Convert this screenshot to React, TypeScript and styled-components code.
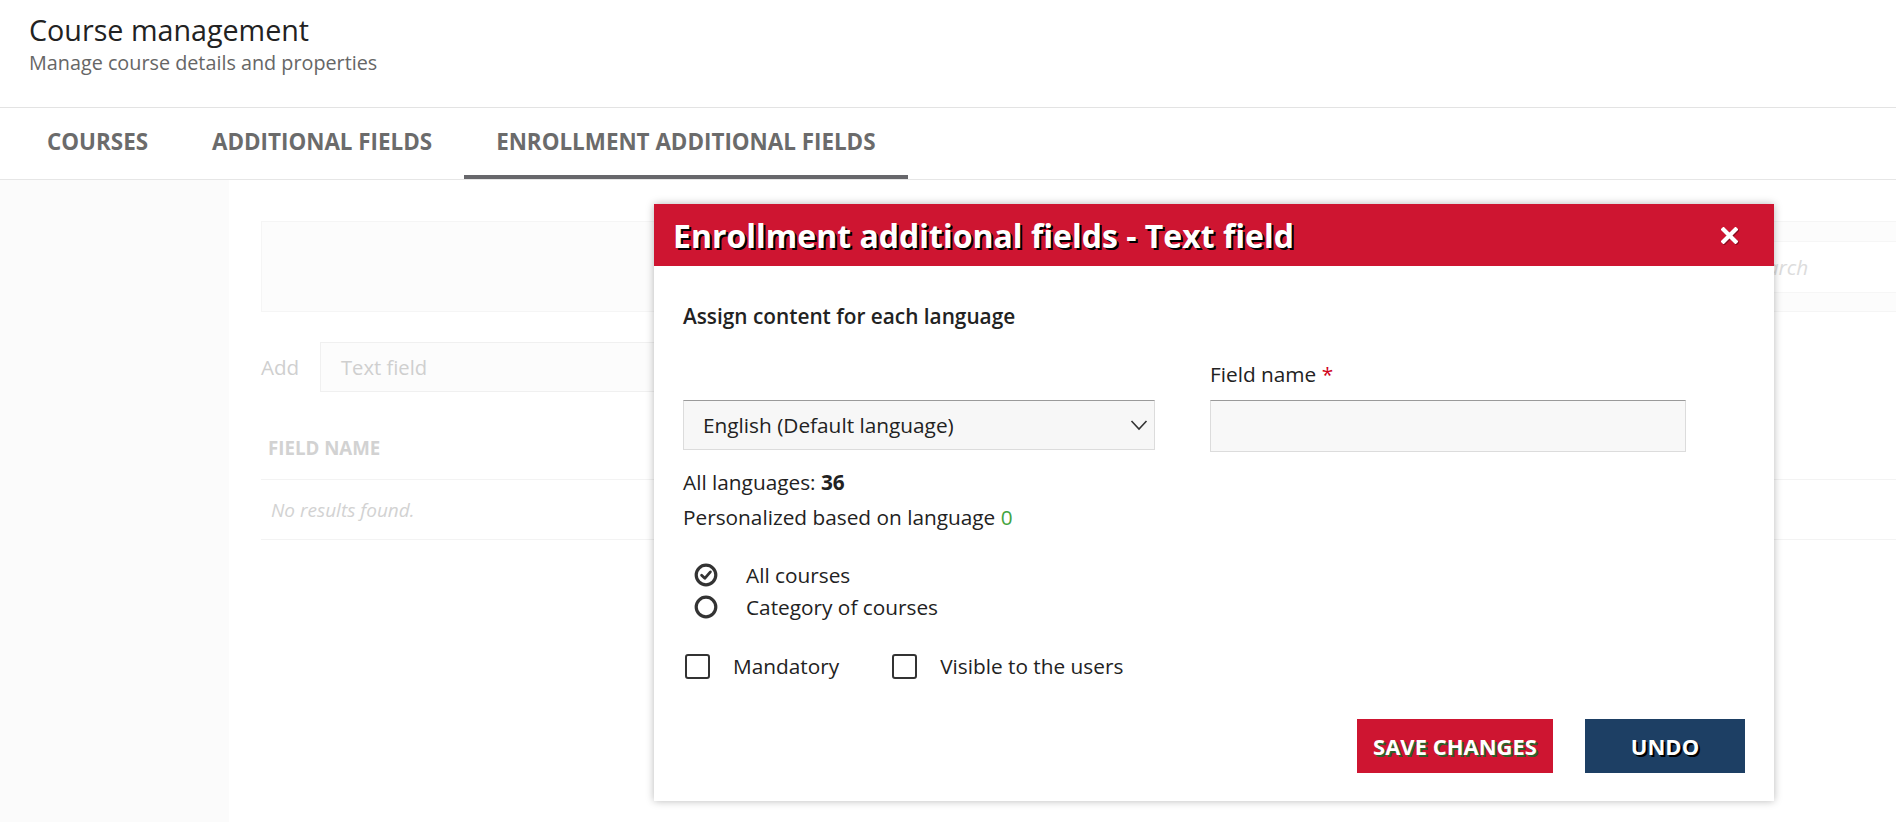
import React from "react";
import styled, { createGlobalStyle } from "styled-components";

const GlobalStyle = createGlobalStyle`
  html, body {
    margin: 0;
    padding: 0;
    background: #ffffff;
    font-family: "Open Sans", "Noto Sans", Arial, sans-serif;
    color: #222;
    overflow: hidden;
  }
  * { box-sizing: border-box; }
`;

const Page = styled.div`
  position: relative;
  width: 1896px;
  height: 822px;
  overflow: hidden;
  display: flex;
  flex-direction: column;
`;

const Header = styled.header`
  padding: 11px 29px 31px;
  border-bottom: 1px solid #e3e3e3;
`;

const Title = styled.h1`
  margin: 0;
  font-size: 28.7px;
  line-height: 38px;
  font-weight: 400;
  color: #222;
`;

const Subtitle = styled.p`
  margin: 0;
  font-size: 19.8px;
  line-height: 27px;
  color: #666;
`;

const TabBar = styled.nav`
  display: flex;
  height: 72px;
  padding-left: 15px;
  border-bottom: 1px solid #e6e6e6;
`;

const Tab = styled.div<{ $active?: boolean }>`
  display: flex;
  align-items: center;
  padding: 0 32px;
  font-size: 22.4px;
  font-weight: 700;
  text-transform: uppercase;
  color: #6b6b6b;
  border-bottom: 4px solid ${(p) => (p.$active ? "#67676b" : "transparent")};
`;

const Content = styled.div`
  flex: 1;
  display: flex;
`;

const Sidebar = styled.aside`
  width: 229px;
  background: #fbfbfb;
`;

const Main = styled.main`
  flex: 1;
  padding: 41px 0 0 32px;
  overflow: hidden;
`;

const FilterPanel = styled.div`
  height: 91px;
  padding: 19px 0 18px;
  background: #fcfcfc;
  border: 1px solid #f5f5f5;
  border-right: none;
  display: flex;
  justify-content: flex-end;
`;

const SearchBox = styled.div`
  width: 171px;
  height: 52px;
  background: #ffffff;
  border: 1px solid #f6f6f6;
  border-right: none;
  display: flex;
  align-items: center;
  padding-left: 20px;
  font-size: 20.8px;
  font-style: italic;
  color: #dcdcdc;
`;

const AddRow = styled.div`
  margin-top: 30px;
  display: flex;
  align-items: center;
`;

const AddLabel = styled.span`
  width: 59px;
  font-size: 20.6px;
  color: #cfcfcf;
`;

const FakeInput = styled.div`
  width: 460px;
  height: 50px;
  border: 1px solid #f0f0f0;
  background: #fcfcfc;
  display: flex;
  align-items: center;
  padding-left: 20px;
  font-size: 20.2px;
  color: #cfcfcf;
`;

const Table = styled.div`
  margin-top: 28px;
`;

const HeadRow = styled.div`
  height: 60px;
  display: flex;
  align-items: center;
  padding: 0 0 4px 7px;
  border-bottom: 1px solid #f3f3f3;
  font-size: 18.7px;
  font-weight: 700;
  color: #d2d2d2;
`;

const BodyRow = styled.div`
  height: 60px;
  display: flex;
  align-items: center;
  padding-left: 10px;
  border-bottom: 1px solid #f3f3f3;
  font-size: 19px;
  font-style: italic;
  color: #d2d2d2;
`;

const Modal = styled.section`
  position: absolute;
  left: 654px;
  top: 204px;
  width: 1120px;
  background: #ffffff;
  box-shadow: 0 0 8px rgba(0, 0, 0, 0.28);
`;

const ModalHeader = styled.div`
  height: 62px;
  background: #ce1531;
  display: flex;
  align-items: center;
  justify-content: space-between;
  padding: 0 36px 0 19px;
`;

const ModalTitle = styled.h2`
  margin: 0;
  font-size: 32px;
  font-weight: 700;
  color: #ffffff;
  text-shadow: 2px 2px 0 #000;
`;

const CloseButton = styled.button`
  border: none;
  background: none;
  padding: 0;
  width: 17px;
  height: 17px;
  display: flex;
  cursor: pointer;
  filter: drop-shadow(1px 1px 0 rgba(0, 0, 0, 0.35));
`;

const ModalBody = styled.div`
  padding: 36px 29px 28px;
  font-size: 20.8px;
  line-height: 29px;
  color: #222;
`;

const SectionTitle = styled.div`
  font-weight: 600;
`;

const FormGrid = styled.div`
  margin-top: 29px;
  display: grid;
  grid-template-columns: 472px 476px;
  grid-template-rows: auto auto;
  column-gap: 55px;
  align-items: start;
`;

const FieldLabel = styled.label`
  display: block;
  grid-column: 2;
  grid-row: 1;
  margin-bottom: 11px;
`;

const Required = styled.span`
  color: #d0021b;
`;

const SelectBox = styled.div`
  grid-column: 1;
  grid-row: 2;
  height: 50px;
  background: #f7f7f7;
  border: 1px solid #dcdcdc;
  border-top-color: #9a9a9a;
  display: flex;
  align-items: center;
  justify-content: space-between;
  padding: 0 6px 0 19px;
`;

const TextInput = styled.div`
  grid-column: 2;
  grid-row: 2;
  height: 52px;
  background: #f8f8f8;
  border: 1px solid #dcdcdc;
  border-top-color: #9a9a9a;
`;

const Stats = styled.div`
  margin-top: 13px;
`;

const StatLine = styled.div`
  line-height: 35px;
`;

const Strong = styled.b`
  font-weight: 700;
`;

const Green = styled.span`
  color: #43a43f;
`;

const RadioGroup = styled.div`
  margin-top: 24px;
  padding-left: 11px;
`;

const RadioRow = styled.div`
  display: flex;
  align-items: center;
  height: 32px;
  gap: 28px;
`;

const RadioIcon = styled.svg`
  width: 24px;
  height: 24px;
  flex-shrink: 0;
`;

const CheckRow = styled.div`
  margin-top: 29px;
  display: flex;
  align-items: center;
  padding-left: 2px;
  gap: 53px;
`;

const CheckItem = styled.label`
  display: flex;
  align-items: center;
  gap: 23px;
`;

const CheckBox = styled.span`
  width: 25px;
  height: 25px;
  border: 2.5px solid #333;
  border-radius: 3px;
  background: #fff;
`;

const Actions = styled.div`
  margin-top: 38px;
  display: flex;
  justify-content: flex-end;
  gap: 32px;
`;

const ActionButton = styled.button<{ $variant: "save" | "undo" }>`
  height: 54px;
  width: ${(p) => (p.$variant === "save" ? "196px" : "160px")};
  border: none;
  border-radius: 0;
  background: ${(p) => (p.$variant === "save" ? "#ce1531" : "#1d3f64")};
  color: #ffffff;
  font-family: "Open Sans", Arial, sans-serif;
  font-size: 22px;
  font-weight: 700;
  text-transform: uppercase;
  text-shadow: 2px 2px 0 ${(p) => (p.$variant === "save" ? "#2f5f2a" : "#000")};
  cursor: pointer;
`;

const Chevron = () => (
  <svg width="18" height="12" viewBox="0 0 18 12">
    <polyline points="1.5,2 9,10 16.5,2" fill="none" stroke="#333" strokeWidth="1.6" />
  </svg>
);

const CloseIcon = () => (
  <svg width="17" height="17" viewBox="0 0 17 17">
    <path d="M2.5 2.5 L14.5 14.5 M14.5 2.5 L2.5 14.5" stroke="#fff" strokeWidth="4.2" strokeLinecap="square" />
  </svg>
);

const Radio = ({ checked }: { checked?: boolean }) => (
  <RadioIcon viewBox="0 0 24 24">
    <circle cx="12" cy="12" r="9.8" fill="none" stroke="#333" strokeWidth="3.2" />
    {checked && (
      <polyline points="7.6,12.2 10.8,15.3 16.4,8.9" fill="none" stroke="#333" strokeWidth="2.8" strokeLinecap="round" strokeLinejoin="round" />
    )}
  </RadioIcon>
);

export default function App() {
  return (
    <>
      <GlobalStyle />
      <Page>
        <Header>
          <Title>Course management</Title>
          <Subtitle>Manage course details and properties</Subtitle>
        </Header>
        <TabBar>
          <Tab>Courses</Tab>
          <Tab>Additional fields</Tab>
          <Tab $active>Enrollment additional fields</Tab>
        </TabBar>
        <Content>
          <Sidebar />
          <Main>
            <FilterPanel>
              <SearchBox>Search</SearchBox>
            </FilterPanel>
            <AddRow>
              <AddLabel>Add</AddLabel>
              <FakeInput>Text field</FakeInput>
            </AddRow>
            <Table>
              <HeadRow>FIELD NAME</HeadRow>
              <BodyRow>No results found.</BodyRow>
            </Table>
          </Main>
        </Content>

        <Modal>
          <ModalHeader>
            <ModalTitle>Enrollment additional fields - Text field</ModalTitle>
            <CloseButton aria-label="Close">
              <CloseIcon />
            </CloseButton>
          </ModalHeader>
          <ModalBody>
            <SectionTitle>Assign content for each language</SectionTitle>
            <FormGrid>
              <FieldLabel>
                Field name <Required>*</Required>
              </FieldLabel>
              <SelectBox>
                <span>English (Default language)</span>
                <Chevron />
              </SelectBox>
              <TextInput />
            </FormGrid>
            <Stats>
              <StatLine>
                All languages: <Strong>36</Strong>
              </StatLine>
              <StatLine>
                Personalized based on language <Green>0</Green>
              </StatLine>
            </Stats>
            <RadioGroup>
              <RadioRow>
                <Radio checked />
                <span>All courses</span>
              </RadioRow>
              <RadioRow>
                <Radio />
                <span>Category of courses</span>
              </RadioRow>
            </RadioGroup>
            <CheckRow>
              <CheckItem>
                <CheckBox />
                Mandatory
              </CheckItem>
              <CheckItem>
                <CheckBox />
                Visible to the users
              </CheckItem>
            </CheckRow>
            <Actions>
              <ActionButton $variant="save">Save changes</ActionButton>
              <ActionButton $variant="undo">Undo</ActionButton>
            </Actions>
          </ModalBody>
        </Modal>
      </Page>
    </>
  );
}
